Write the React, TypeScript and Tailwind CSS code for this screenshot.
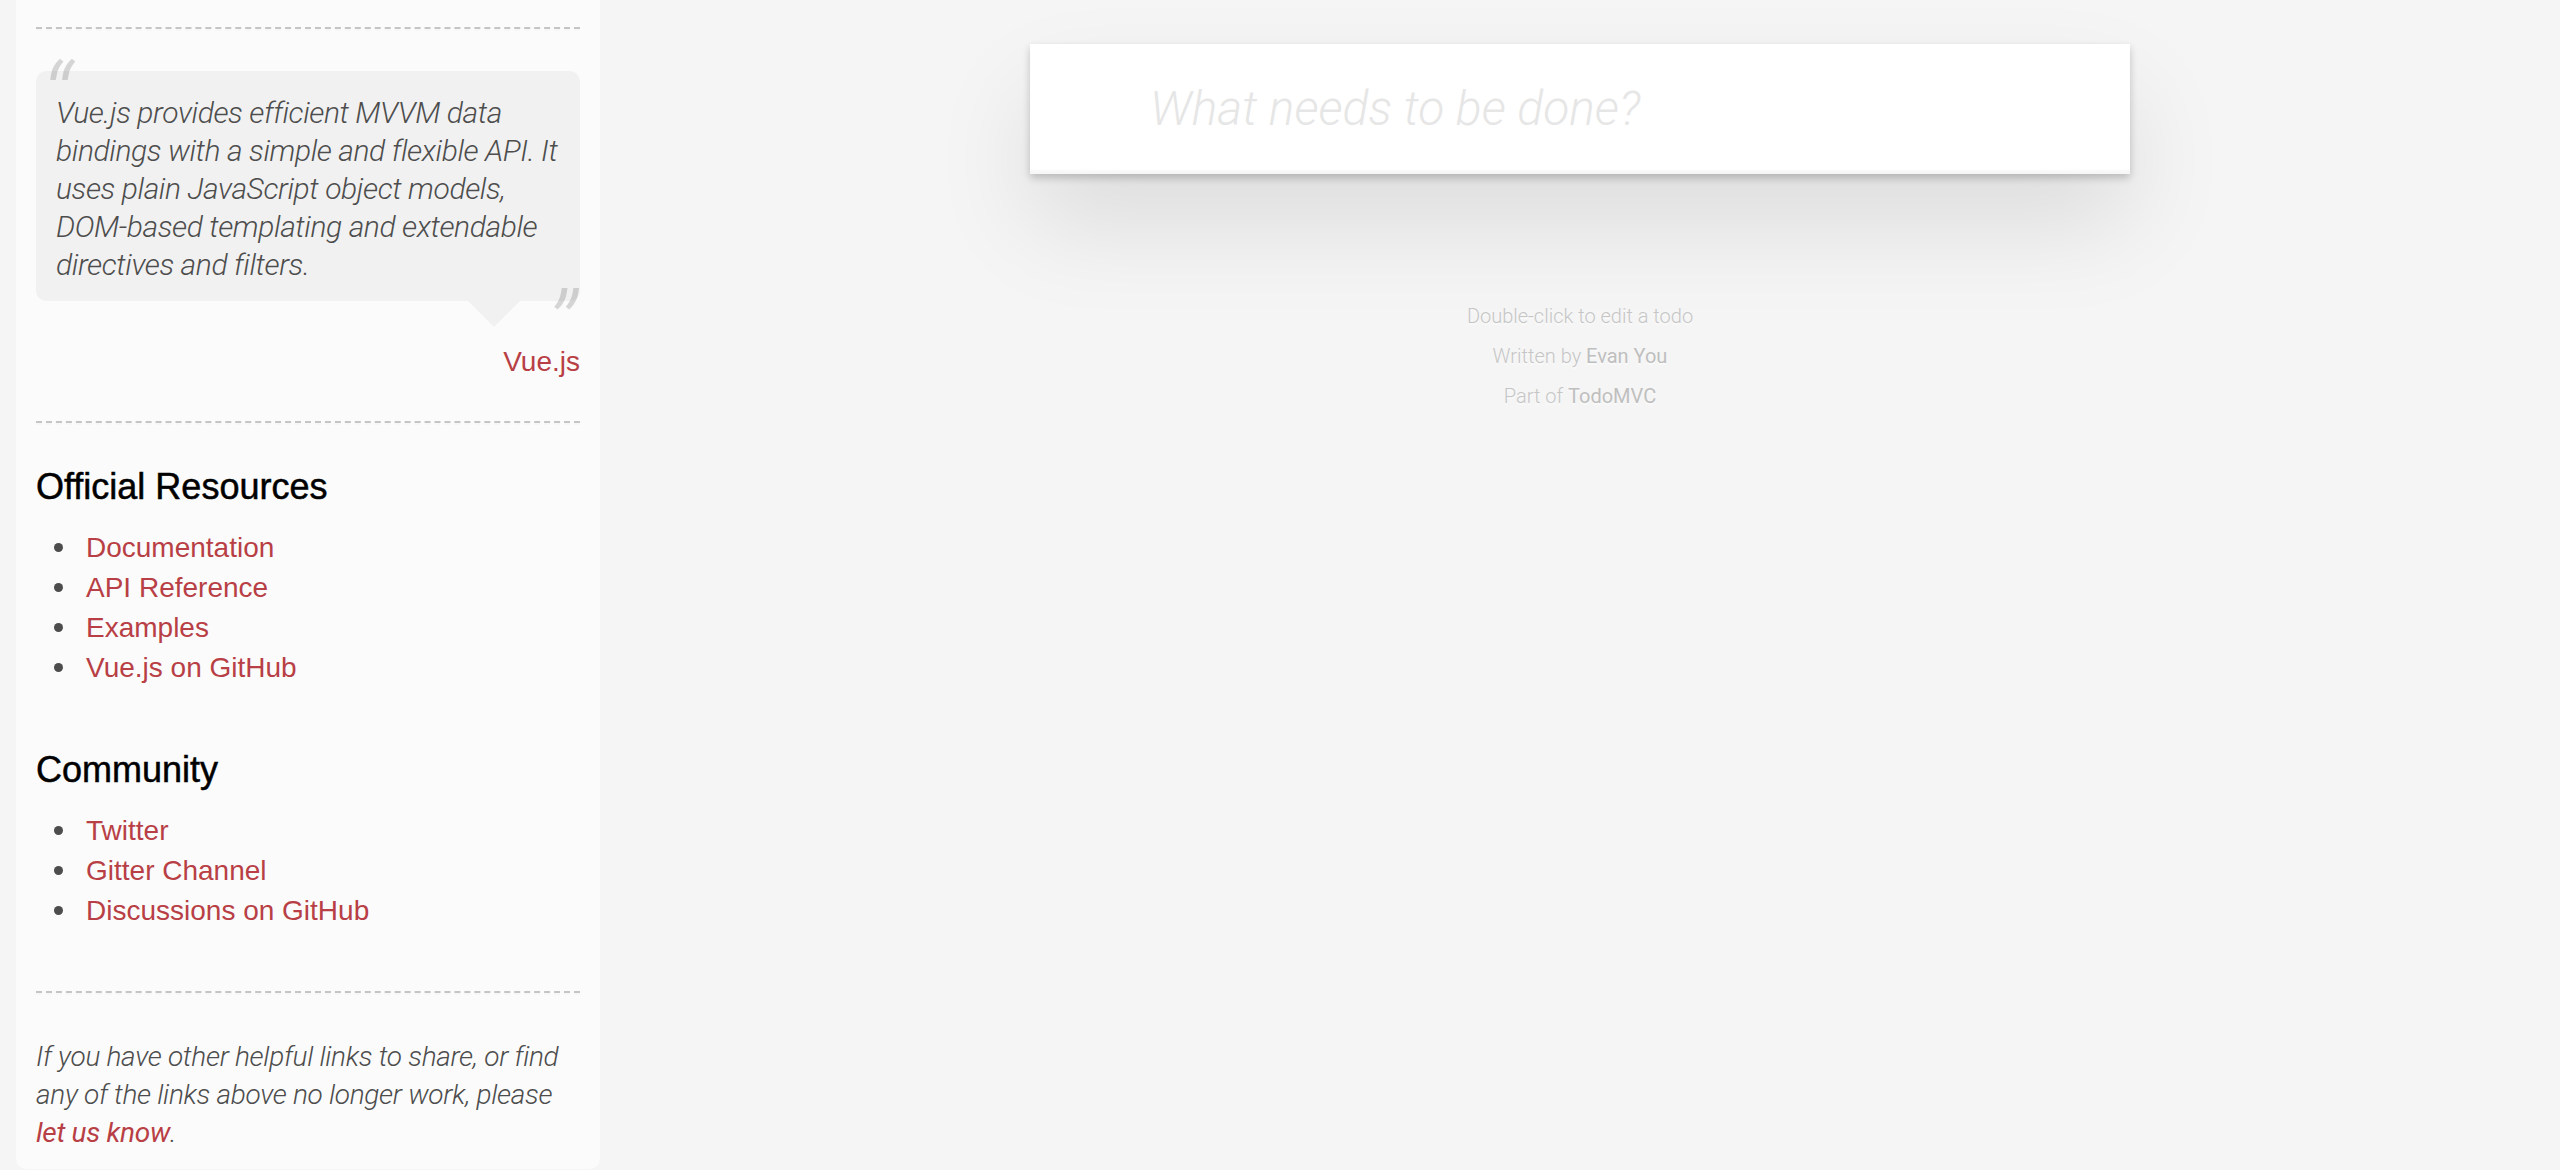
import React from "react";

const light = "font-['Roboto','Liberation_Sans',sans-serif] font-light";

function Rule() {
  return <div className="border-0 border-t-2 border-b-2 border-dashed border-t-[#c5c5c5] border-b-[#f7f7f7]" />;
}

function LinkList({ items }: { items: string[] }) {
  return (
    <ul className="ml-[50px] mb-[60px] text-[28px] leading-[40px] text-[#4d4d4d]">
      {items.map((item) => (
        <li
          key={item}
          className="relative before:absolute before:left-[-32px] before:top-[15px] before:h-[9px] before:w-[9px] before:rounded-full before:bg-[#4d4d4d] before:content-['']"
        >
          <a href="#" className="text-[#b83f45]">
            {item}
          </a>
        </li>
      ))}
    </ul>
  );
}

export default function App() {
  return (
    <div className="min-h-screen h-[1170px] overflow-hidden bg-[#f5f5f5] flex font-['Liberation_Sans',Arial,sans-serif] text-[#4d4d4d]">
      {/* Left: learn sidebar */}
      <div className="w-[600px] shrink-0 pl-4">
        <aside className="w-[584px] h-[1169px] bg-white/60 rounded-b-[10px] px-5 pt-[27px] pb-5">
          <Rule />

          <blockquote className="relative mt-10 mb-[120px] rounded-[10px] bg-[rgba(0,0,0,0.04)] px-5 pt-[23px] pb-[17px]">
            <span className={`absolute left-[5px] -top-[20px] text-[100px] leading-none italic text-black/15 ${light}`}>
              “
            </span>
            <p className={`text-[30px] leading-[38px] italic tracking-[-0.4px] text-[#4d4d4d] ${light}`}>
              Vue.js provides efficient MVVM data bindings with a simple and flexible API. It uses plain JavaScript
              object models, DOM-based templating and extendable directives and filters.
            </p>
            <span className={`absolute right-[4px] -bottom-[78px] text-[100px] leading-none italic text-black/15 ${light}`}>
              ”
            </span>
            <div className="absolute top-full right-[60px] border-[26px] border-transparent border-t-[rgba(0,0,0,0.04)]" />
            <footer className="absolute right-0 -bottom-[80px] text-[28px] leading-[39px]">
              <a href="#" className="text-[#b83f45]">
                Vue.js
              </a>
            </footer>
          </blockquote>

          <Rule />

          <h4 className="mt-10 mb-5 text-[36px] leading-[43px] text-black [-webkit-text-stroke:0.5px_black]">
            Official Resources
          </h4>
          <LinkList items={["Documentation", "API Reference", "Examples", "Vue.js on GitHub"]} />

          <h4 className="mt-5 mb-5 text-[36px] leading-[43px] text-black [-webkit-text-stroke:0.5px_black]">
            Community
          </h4>
          <LinkList items={["Twitter", "Gitter Channel", "Discussions on GitHub"]} />

          <Rule />

          <p className={`mt-[43px] text-[28px] leading-[38px] italic tracking-[-0.3px] text-[#4d4d4d] ${light}`}>
            If you have other helpful links to share, or find any of the links above no longer work, please{" "}
            <a href="#" className="text-[#b83f45] font-normal">
              let us know
            </a>
            .
          </p>
        </aside>
      </div>

      {/* Right: todo app */}
      <main className="flex-1 min-w-0">
        <section className="w-[1100px] mx-auto mt-[44px] bg-white shadow-[0_4px_8px_0_rgba(0,0,0,0.2),0_50px_100px_0_rgba(0,0,0,0.1)]">
          <div className="pl-[120px] pr-8 py-8 shadow-[inset_0_-4px_2px_rgba(0,0,0,0.03)]">
            <span className={`block text-[48px] leading-[66px] italic text-[#e6e6e6] ${light}`}>
              What needs to be done?
            </span>
          </div>
        </section>

        <div
          className={`mt-[132px] flex flex-col items-center gap-5 text-[20px] leading-[20px] text-[#c6c6c6] [text-shadow:0_2px_0_rgba(255,255,255,0.5)] ${light}`}
        >
          <p>Double-click to edit a todo</p>
          <p>
            Written by <a href="#" className="font-normal text-[#bfbfbf]">Evan You</a>
          </p>
          <p>
            Part of <a href="#" className="font-normal text-[#bfbfbf]">TodoMVC</a>
          </p>
        </div>
      </main>
    </div>
  );
}
